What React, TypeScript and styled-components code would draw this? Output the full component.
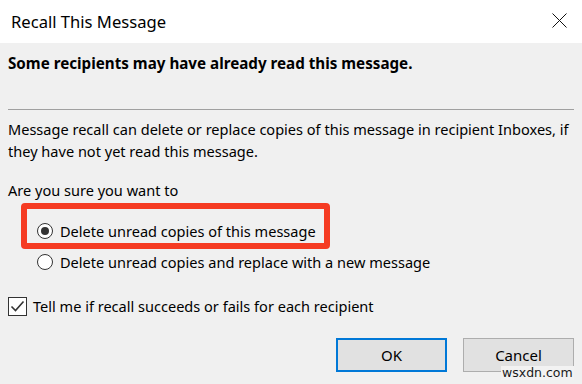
import React from "react";
import styled, { createGlobalStyle } from "styled-components";

const Global = createGlobalStyle`
  html, body { margin: 0; padding: 0; }
  body { background: #f0f0f0; font-family: "Noto Sans", "Segoe UI", sans-serif; color: #000; }
`;

const Dialog = styled.div`
  position: relative;
  width: 582px;
  height: 384px;
  background: #f0f0f0;
  display: flex;
  flex-direction: column;
  overflow: hidden;
`;

const TitleBar = styled.div`
  height: 43px;
  background: #fff;
  display: flex;
  align-items: center;
  justify-content: space-between;
  padding: 0 15px 0 11px;
  box-sizing: border-box;
`;

const Title = styled.div`
  font-size: 16.6px;
  line-height: 22px;
  color: #000;
`;

const CloseBtn = styled.div`
  width: 15px;
  height: 15px;
  display: flex;
  margin-top: -2px;
`;

const Body = styled.div`
  padding: 0 8px;
  display: flex;
  flex-direction: column;
`;

const Heading = styled.div`
  margin-top: 9px;
  font-size: 15.2px;
  font-weight: 700;
  line-height: 22px;
  white-space: nowrap;
`;

const Separator = styled.div`
  margin-top: 35px;
  height: 1px;
  background: #a0a0a0;
`;

const Text = styled.div<{ $mt: number }>`
  margin-top: ${(p) => p.$mt}px;
  font-size: 14.55px;
  line-height: 22px;
  white-space: nowrap;
`;

const Options = styled.div`
  margin-top: 19px;
  padding-left: 29px;
  display: flex;
  flex-direction: column;
  gap: 9px;
`;

const OptionRow = styled.label`
  position: relative;
  display: flex;
  align-items: center;
  gap: 7px;
  height: 22px;
  font-size: 14.55px;
  white-space: nowrap;
`;

const Highlight = styled.div`
  position: absolute;
  left: -16px;
  top: -17px;
  width: 309px;
  height: 46px;
  box-sizing: border-box;
  border: 6px solid #f53b22;
  border-radius: 4px;
  pointer-events: none;
`;

const Radio = styled.span<{ $checked?: boolean }>`
  width: 16px;
  height: 16px;
  box-sizing: border-box;
  border: 1px solid #333;
  border-radius: 50%;
  background: #fff;
  display: flex;
  align-items: center;
  justify-content: center;
  flex-shrink: 0;
  &::after {
    content: "";
    width: 8px;
    height: 8px;
    border-radius: 50%;
    background: ${(p) => (p.$checked ? "#333" : "transparent")};
  }
`;

const CheckRow = styled.label`
  margin-top: 22px;
  display: flex;
  align-items: center;
  gap: 6px;
  height: 22px;
  font-size: 14.55px;
  white-space: nowrap;
`;

const CheckBox = styled.span`
  width: 19px;
  height: 19px;
  box-sizing: border-box;
  border: 1px solid #333;
  background: #fff;
  display: flex;
  align-items: center;
  justify-content: center;
  flex-shrink: 0;
`;

const Buttons = styled.div`
  margin-top: 21px;
  display: flex;
  justify-content: flex-end;
  gap: 16px;
`;

const Button = styled.div<{ $primary?: boolean }>`
  width: 111px;
  height: 34px;
  box-sizing: border-box;
  background: #e1e1e1;
  border: ${(p) => (p.$primary ? "2px solid #0078d7" : "1px solid #adadad")};
  display: flex;
  align-items: center;
  justify-content: center;
  font-size: 15px;
  color: #000;
`;

const Watermark = styled.div`
  position: absolute;
  left: 501px;
  top: 366px;
  font-family: "DejaVu Sans", sans-serif;
  font-size: 12.5px;
  line-height: 14px;
  color: #1a1a1a;
  background: #f2f2f2;
  padding: 0 1px;
`;

export default function App() {
  return (
    <>
      <Global />
      <Dialog>
        <TitleBar>
          <Title>Recall This Message</Title>
          <CloseBtn>
            <svg width="15" height="15" viewBox="0 0 15 15">
              <path d="M0.5 0.5 L14.5 14.5 M14.5 0.5 L0.5 14.5" stroke="#111" strokeWidth="1" fill="none" />
            </svg>
          </CloseBtn>
        </TitleBar>
        <Body>
          <Heading>Some recipients may have already read this message.</Heading>
          <Separator />
          <Text $mt={8}>
            Message recall can delete or replace copies of this message in recipient Inboxes, if
            <br />
            they have not yet read this message.
          </Text>
          <Text $mt={17}>Are you sure you want to</Text>
          <Options>
            <OptionRow>
              <Highlight />
              <Radio $checked />
              Delete unread copies of this message
            </OptionRow>
            <OptionRow>
              <Radio />
              Delete unread copies and replace with a new message
            </OptionRow>
          </Options>
          <CheckRow>
            <CheckBox>
              <svg width="15" height="15" viewBox="0 0 15 15">
                <path d="M1.5 7.5 L5.5 11.5 L13.5 2.5" stroke="#333" strokeWidth="1.6" fill="none" />
              </svg>
            </CheckBox>
            Tell me if recall succeeds or fails for each recipient
          </CheckRow>
          <Buttons>
            <Button $primary>OK</Button>
            <Button>Cancel</Button>
          </Buttons>
        </Body>
        <Watermark>wsxdn.com</Watermark>
      </Dialog>
    </>
  );
}
